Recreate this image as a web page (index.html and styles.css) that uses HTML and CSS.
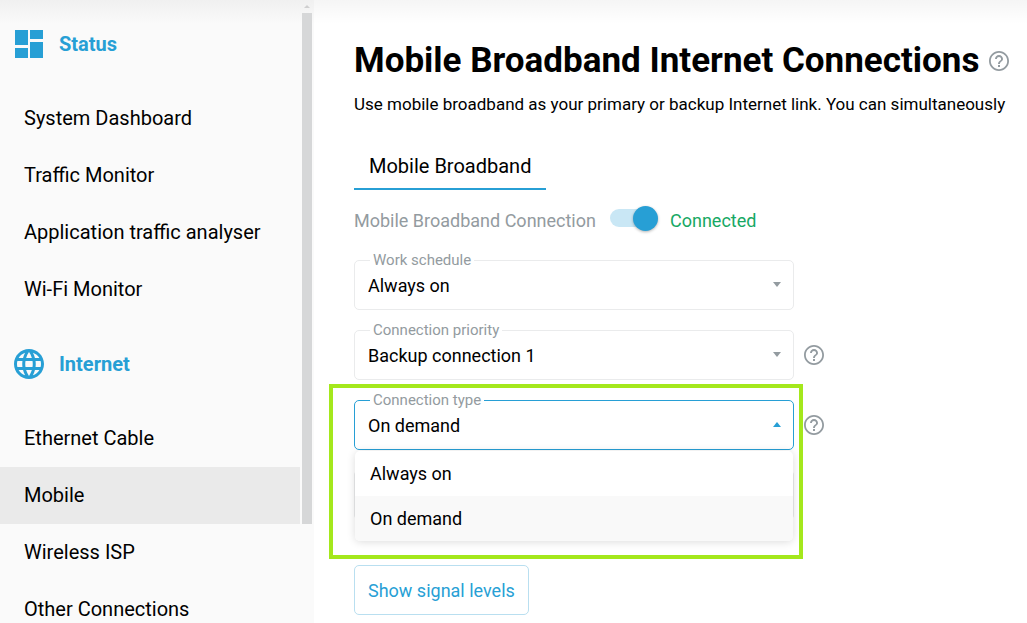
FILE: index.html
```html
<!DOCTYPE html>
<html lang="en">
  <head>
    <meta charset="UTF-8" />
    <meta name="viewport" content="width=device-width, initial-scale=1.0" />
    <title>Mobile Broadband</title>
    <link rel="stylesheet" href="styles.css">
  </head>
  <body>
    <svg class="sprite" aria-hidden="true">
      <symbol id="help" viewBox="2 2 20 20">
        <path d="M11 18h2v-2h-2v2zm1-16C6.48 2 2 6.48 2 12s4.48 10 10 10 10-4.48 10-10S17.52 2 12 2zm0 18.200c-4.520 0-8.200-3.680-8.200-8.200S7.480 3.800 12 3.800s8.200 3.680 8.200 8.200-3.680 8.200-8.200 8.200zM12 6c-2.210 0-4 1.790-4 4h1.900c0-1.160.94-2.100 2.100-2.100s2.100.94 2.100 2.100c0 2-3.050 1.750-3.050 5h1.900c0-2.250 3.050-2.500 3.050-5 0-2.210-1.790-4-4-4z" />
      </symbol>
    </svg>
    <div class="page">
      <aside class="sidebar">
        <nav class="menu">
          <h2 class="menu-title">
            <svg class="menu-icon" viewBox="0 0 30 30">
              <path d="M1 1h13v15H1zM16 1h13v9H16zM1 19h13v10H1zM16 13h13v16H16z" />
            </svg>
            Status
          </h2>
          <ul class="menu-list">
            <li><a href="#">System Dashboard</a></li>
            <li><a href="#">Traffic Monitor</a></li>
            <li><a href="#">Application traffic analyser</a></li>
            <li><a href="#">Wi-Fi Monitor</a></li>
          </ul>
          <h2 class="menu-title">
            <svg class="menu-icon" viewBox="2 2 20 20">
              <path d="M11.990 2C6.470 2 2 6.480 2 12s4.470 10 9.990 10C17.520 22 22 17.520 22 12S17.520 2 11.990 2zm6.930 6h-2.950c-.32-1.250-.78-2.450-1.380-3.560 1.840.63 3.370 1.910 4.330 3.560zM12 4.040c.83 1.200 1.480 2.530 1.910 3.960h-3.820c.43-1.430 1.080-2.760 1.910-3.960zM4.260 14C4.100 13.360 4 12.690 4 12s.1-1.360.26-2h3.380c-.08.66-.14 1.320-.14 2s.06 1.340.14 2H4.260zm.82 2h2.950c.32 1.250.78 2.450 1.380 3.560-1.840-.63-3.370-1.900-4.330-3.560zm2.950-8H5.080c.96-1.660 2.490-2.930 4.330-3.560C8.810 5.550 8.350 6.750 8.030 8zM12 19.960c-.83-1.200-1.480-2.530-1.910-3.960h3.820c-.43 1.430-1.080 2.760-1.910 3.960zM14.340 14H9.660c-.09-.66-.16-1.320-.16-2s.07-1.350.16-2h4.680c.09.650.16 1.320.16 2s-.07 1.340-.16 2zm.25 5.560c.6-1.110 1.060-2.310 1.380-3.560h2.950c-.96 1.650-2.490 2.930-4.330 3.560zM16.360 14c.08-.66.14-1.320.14-2s-.06-1.340-.14-2h3.380c.16.64.26 1.310.26 2s-.1 1.360-.26 2h-3.380z" />
            </svg>
            Internet
          </h2>
          <ul class="menu-list">
            <li><a href="#">Ethernet Cable</a></li>
            <li><a href="#" class="active">Mobile</a></li>
            <li><a href="#">Wireless ISP</a></li>
            <li><a href="#">Other Connections</a></li>
          </ul>
        </nav>
        <div class="scrollbar">
          <span class="scroll-arrow"></span>
          <span class="scroll-thumb"></span>
        </div>
      </aside>

      <main class="content">
        <header class="heading">
          <h1>Mobile Broadband Internet Connections</h1>
          <button class="help" aria-label="Help"><svg><use href="#help" /></svg></button>
        </header>
        <p class="intro">Use mobile broadband as your primary or backup Internet link. You can simultaneously</p>
        <div class="tabs">
          <button class="tab">Mobile Broadband</button>
        </div>

        <div class="switch-row">
          <label for="connection">Mobile Broadband Connection</label>
          <input id="connection" class="switch" type="checkbox" checked />
          <span class="state">Connected</span>
        </div>

        <div class="row">
          <div class="field">
            <label for="schedule">Work schedule</label>
            <select id="schedule">
              <option>Always on</option>
            </select>
          </div>
        </div>
        <div class="row">
          <div class="field">
            <label for="priority">Connection priority</label>
            <select id="priority">
              <option>Backup connection 1</option>
            </select>
          </div>
          <button class="help" aria-label="Help"><svg><use href="#help" /></svg></button>
        </div>
        <div class="row">
          <div class="field open">
            <label for="type">Connection type</label>
            <select id="type">
              <option>Always on</option>
              <option selected>On demand</option>
            </select>
            <ul class="options">
              <li>Always on</li>
              <li class="selected">On demand</li>
            </ul>
            <div class="highlight"></div>
          </div>
          <button class="help" aria-label="Help"><svg><use href="#help" /></svg></button>
        </div>
        <div class="row covered">
          <div class="field"></div>
        </div>
        <button class="signal">Show signal levels</button>
      </main>
    </div>
  </body>
</html>
```

FILE: styles.css
```css
* {
  box-sizing: border-box;
  margin: 0;
  padding: 0;
}
body {
  font-family: Roboto, sans-serif;
  font-size: 18px;
  color: #000;
  background: #fff;
  overflow: hidden;
}
button,
select {
  font: inherit;
  color: inherit;
  background: none;
  border: none;
}
ul {
  list-style: none;
}
.sprite {
  display: none;
}
.page {
  display: flex;
  height: 100vh;
  background: linear-gradient(rgb(0 0 0 / 4%), transparent 24px);
}

/* sidebar */
.sidebar {
  display: flex;
  flex: none;
  width: 314px;
  overflow: hidden;
  background: linear-gradient(#f0f0f0, #fafafa 24px);
}
.menu {
  flex: 1;
}
.menu-title {
  display: flex;
  align-items: center;
  gap: 15px;
  height: 88px;
  padding-left: 14px;
  font-size: 20px;
  font-weight: 700;
  color: #279fd5;
}
.menu-icon {
  width: 30px;
  height: 30px;
  fill: #279fd5;
}
.menu-list {
  padding: 2px 0;
}
.menu-list a {
  display: block;
  padding-left: 24px;
  font-size: 20px;
  line-height: 57px;
  color: #000;
  text-decoration: none;
}
.menu-list .active {
  background: #eaeaea;
}
.scrollbar {
  display: flex;
  flex-direction: column;
  align-items: center;
  width: 14px;
  padding-top: 5px;
}
.scroll-arrow {
  border: 3px solid transparent;
  border-top: none;
  border-bottom-color: #cfcfd0;
}
.scroll-thumb {
  width: 10px;
  height: 82vh;
  margin-top: 5px;
  background: #d6d7d8;
}

/* content */
.content {
  flex: 1;
  padding: 38px 0 0 40px;
}
.heading {
  display: flex;
  align-items: center;
  gap: 10px;
}
h1 {
  font-size: 35px;
  font-weight: 700;
  line-height: 46px;
  white-space: nowrap;
}
.help {
  width: 20px;
  height: 20px;
  cursor: pointer;
}
.help svg {
  display: block;
  width: 20px;
  height: 20px;
  fill: #939ba0;
}
.intro {
  margin-top: 8px;
  font-size: 17px;
  line-height: 24px;
  white-space: nowrap;
}
.tabs {
  margin-top: 28px;
}
.tab {
  height: 46px;
  padding: 0 15px;
  font-size: 20px;
  border-bottom: 2px solid #279fd5;
}
.switch-row {
  display: flex;
  align-items: center;
  height: 60px;
  color: #939ba0;
}
.switch {
  display: flex;
  align-items: center;
  justify-content: flex-end;
  width: 46px;
  height: 18px;
  margin: 0 14px 4px;
  appearance: none;
  background: #c9e7f5;
  border-radius: 9px;
}
.switch::before {
  content: "";
  width: 25px;
  height: 25px;
  margin-right: -2px;
  background: #279fd5;
  border-radius: 50%;
  box-shadow: 0 1px 3px rgb(0 0 0 / 30%);
}
.state {
  color: #17a864;
}

.row {
  display: flex;
  align-items: center;
  gap: 10px;
  margin: 10px 0 20px;
}
.row + .row {
  margin-top: 0;
}
.field {
  position: relative;
  width: 440px;
  height: 50px;
  border: 1px solid #eaebec;
  border-radius: 5px;
}
.field label {
  position: absolute;
  top: -11px;
  left: 15px;
  padding: 0 3px;
  font-size: 15px;
  line-height: 20px;
  color: #939ba0;
  background: #fff;
}
.field select {
  width: 100%;
  height: 100%;
  padding: 0 13px;
  appearance: none;
}
.field::after {
  content: "";
  position: absolute;
  top: 21px;
  right: 12px;
  border: 4px solid transparent;
  border-top: 5px solid #939ba0;
  border-bottom: none;
}
.open {
  border-color: #279fd5;
}
.open::after {
  border-top: none;
  border-bottom: 5px solid #279fd5;
}
.options {
  position: absolute;
  top: 50px;
  left: 0;
  right: 0;
  z-index: 2;
  overflow: hidden;
  background: #fff;
  border-radius: 5px;
  box-shadow: 0 1px 8px rgb(0 0 0 / 14%);
}
.options li {
  padding-left: 15px;
  line-height: 45px;
}
.options .selected {
  background: #f9f9f9;
}
.highlight {
  position: absolute;
  top: -17px;
  left: -26px;
  right: -10px;
  height: 175px;
  z-index: 3;
  border: 4px solid #a4e81c;
  pointer-events: none;
}
.covered {
  margin-bottom: 45px;
}
.signal {
  height: 50px;
  padding: 0 13px;
  color: #279fd5;
  border: 1px solid #b9dff0;
  border-radius: 5px;
}
```
